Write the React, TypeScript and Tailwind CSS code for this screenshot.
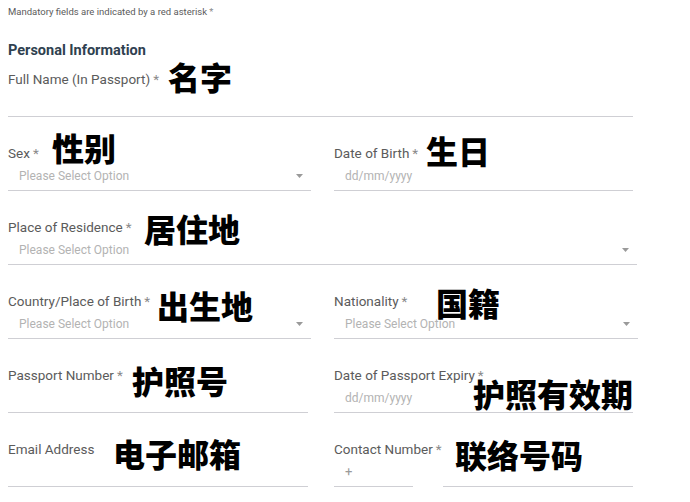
type FieldProps = {
  label: string;
  required?: boolean;
  note: string;
  noteClass: string;
  placeholder?: string;
  select?: boolean;
  contact?: boolean;
};

function Caret() {
  return (
    <svg width="7" height="4" viewBox="0 0 7 4" className="mr-[8px] shrink-0">
      <path d="M0 0 L7 0 L3.5 4 Z" fill="#9a9a9a" />
    </svg>
  );
}

function Field({
  label,
  required = true,
  note,
  noteClass,
  placeholder,
  select,
  contact,
}: FieldProps) {
  return (
    <div className="relative">
      <div className="h-[18px] text-[13.5px] leading-[18px] text-[#5b5b5b]">
        {label}
        {required && <span className="ml-[3px] text-[#8a8a8a]">*</span>}
      </div>

      {contact ? (
        <div className="flex h-[29px] items-end gap-[30px]">
          <div className="flex h-full w-[79px] items-center border-b border-[#cfcfd4] pl-[11px] text-[13px] text-[#9a9a9a]">
            +
          </div>
          <div className="h-full flex-1 border-b border-[#cfcfd4]" />
        </div>
      ) : (
        <div className="flex h-[29px] items-center justify-between border-b border-[#cfcfd4] pl-[11px]">
          <span className="text-[12px] text-[#b3b3b3]">{placeholder}</span>
          {select && <Caret />}
        </div>
      )}

      <span
        className={`absolute whitespace-nowrap text-[32px] font-black leading-none text-black ${noteClass}`}
        style={{ fontFamily: '"Noto Sans CJK SC", sans-serif' }}
      >
        {note}
      </span>
    </div>
  );
}

export default function App() {
  return (
    <div
      className="h-[502px] w-[690px] overflow-hidden bg-white pl-[8px] pr-[53px]"
      style={{ fontFamily: "Roboto, 'Noto Sans CJK SC', sans-serif" }}
    >
      <p className="pt-[5px] text-[9.5px] leading-[14px] text-[#5b5b5b]">
        Mandatory fields are indicated by a red asterisk{" "}
        <span className="text-[#8a8a8a]">*</span>
      </p>

      <h2 className="mt-[23px] text-[14.5px] font-bold leading-[18px] text-[#2f4150]">
        Personal Information
      </h2>

      <div className="mt-[10px] flex flex-col gap-[27px]">
        <div className="pr-[4px]">
          <Field
            label="Full Name (In Passport)"
            note="名字"
            noteClass="left-[160px] top-[-10px]"
          />
        </div>

        <div className="grid grid-cols-[303px_299px] gap-x-[23px]">
          <Field
            label="Sex"
            note="性别"
            noteClass="left-[44px] top-[-13px]"
            placeholder="Please Select Option"
            select
          />
          <Field
            label="Date of Birth"
            note="生日"
            noteClass="left-[92px] top-[-10px]"
            placeholder="dd/mm/yyyy"
          />
        </div>

        <Field
          label="Place of Residence"
          note="居住地"
          noteClass="left-[136px] top-[-6px]"
          placeholder="Please Select Option"
          select
        />

        <div className="grid grid-cols-[303px_304px] gap-x-[23px]">
          <Field
            label="Country/Place of Birth"
            note="出生地"
            noteClass="left-[149px] top-[-3px]"
            placeholder="Please Select Option"
            select
          />
          <Field
            label="Nationality"
            note="国籍"
            noteClass="left-[102px] top-[-6px]"
            placeholder="Please Select Option"
            select
          />
        </div>

        <div className="grid grid-cols-[300px_299px] gap-x-[26px]">
          <Field
            label="Passport Number"
            note="护照号"
            noteClass="left-[124px] top-[-2px]"
          />
          <Field
            label="Date of Passport Expiry"
            note="护照有效期"
            noteClass="left-[139px] top-[11px]"
            placeholder="dd/mm/yyyy"
          />
        </div>

        <div className="grid grid-cols-[300px_299px] gap-x-[26px]">
          <Field
            label="Email Address"
            required={false}
            note="电子邮箱"
            noteClass="left-[105px] top-[-3px]"
          />
          <Field
            label="Contact Number"
            note="联络号码"
            noteClass="left-[121px] top-[-2px]"
            contact
          />
        </div>
      </div>
    </div>
  );
}
